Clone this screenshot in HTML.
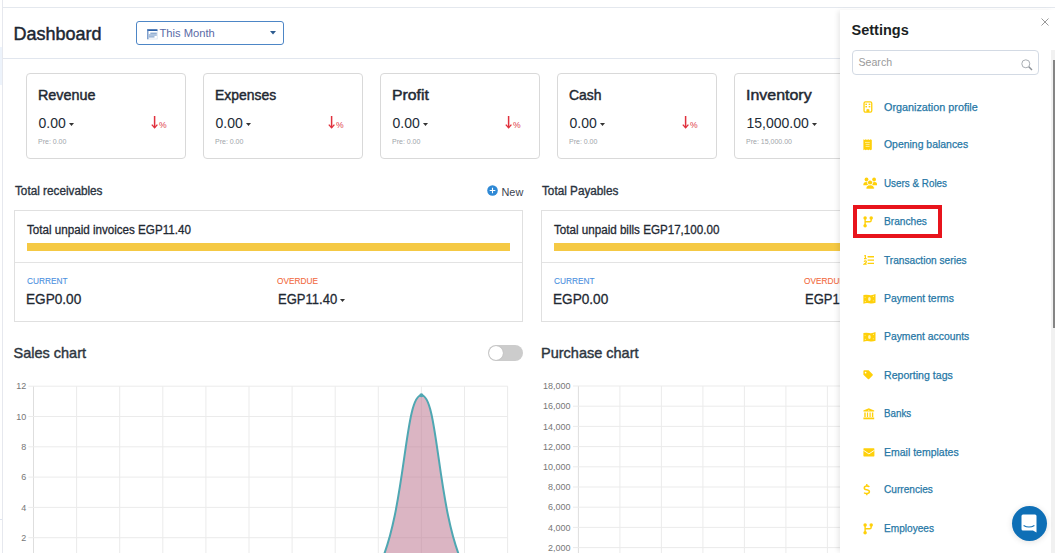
<!DOCTYPE html>
<html><head><meta charset="utf-8"><style>
html,body{margin:0;padding:0;}
body{width:1055px;height:553px;overflow:hidden;position:relative;background:#fff;font-family:"Liberation Sans",sans-serif;}
.t{position:absolute;white-space:nowrap;}
.r{position:absolute;}
svg.r{display:block}
</style></head><body>
<div class="r" style="left:2px;top:7px;width:1053px;height:1px;background:#e4e8ee"></div>
<div class="r" style="left:2px;top:0px;width:1px;height:553px;background:#e6e8ee"></div>
<div class="r" style="left:0px;top:47px;width:2px;height:38px;background:#edf3fb"></div>
<div class="r" style="left:0px;top:519px;width:2px;height:1px;background:#dde3ee"></div>
<div class="r" style="left:3px;top:58px;width:1052px;height:1px;background:#e1e6ee"></div>
<div class="t" style="left:13.50px;top:25.06px;font-size:18px;line-height:18px;color:#1d2733;font-weight:normal;-webkit-text-stroke:0.45px #1d2733;">Dashboard</div>
<div class="r" style="left:136px;top:21px;width:146px;height:22px;border:1px solid #4d86c6;border-radius:3px;box-sizing:content-box"></div>
<svg class="r" style="left:146.5px;top:28.5px" width="11" height="11" viewBox="0 0 11 11"><rect x="0.6" y="0.6" width="9.6" height="9.4" fill="none" stroke="#cad7ea" stroke-width="0.6"/><rect x="0.3" y="0.2" width="10.2" height="1.9" rx="0.6" fill="#2e62a8"/><rect x="0.3" y="0.2" width="1.1" height="10" fill="#5783bf"/><path d="M3.3 4.2H9.8M1.8 6.0H9.8M1.8 7.9H7.5" stroke="#4f7db8" stroke-width="0.9"/></svg>
<div class="t" style="left:159.50px;top:27.52px;font-size:11.2px;line-height:11.2px;color:#5a6aa6;font-weight:normal;">This Month</div>
<svg class="r" style="left:270px;top:31px" width="6" height="4" viewBox="0 0 6 4"><path d="M0 0H6L3 3.5Z" fill="#2d5b8f"/></svg>
<div class="r" style="left:26px;top:73px;width:158px;height:84px;border:1px solid #d9d9d9;border-radius:4px;box-sizing:content-box;background:#fff"></div>
<div class="t" style="left:38.00px;top:88.33px;font-size:14.5px;line-height:14.5px;color:#1f2933;font-weight:normal;-webkit-text-stroke:0.45px #1f2933;transform:scaleX(0.99);transform-origin:0 0;">Revenue</div>
<div class="t" style="left:38.50px;top:116.45px;font-size:14px;line-height:14px;color:#222b36;font-weight:normal;white-space:nowrap;">0.00<svg style="display:inline-block;margin-left:3px;vertical-align:2px" width="5" height="3" viewBox="0 0 5 3"><path d="M0 0H5L2.5 3Z" fill="#333"/></svg></div>
<div class="t" style="left:38.00px;top:138.07px;font-size:7px;line-height:7px;color:#a0a5aa;font-weight:normal;">Pre: 0.00</div>
<svg class="r" style="left:151px;top:115px" width="7" height="14" viewBox="0 0 7 14"><path d="M3.6 1V12.6" stroke="#e0303c" stroke-width="1.5"/><path d="M0.8 9.6L3.6 12.8L6.4 9.6" fill="none" stroke="#e0303c" stroke-width="1.3"/></svg>
<div class="t" style="left:159.00px;top:121.22px;font-size:8.6px;line-height:8.6px;color:#e0404a;font-weight:normal;">%</div>
<div class="r" style="left:203px;top:73px;width:158px;height:84px;border:1px solid #d9d9d9;border-radius:4px;box-sizing:content-box;background:#fff"></div>
<div class="t" style="left:215.00px;top:88.33px;font-size:14.5px;line-height:14.5px;color:#1f2933;font-weight:normal;-webkit-text-stroke:0.45px #1f2933;transform:scaleX(0.96);transform-origin:0 0;">Expenses</div>
<div class="t" style="left:215.50px;top:116.45px;font-size:14px;line-height:14px;color:#222b36;font-weight:normal;white-space:nowrap;">0.00<svg style="display:inline-block;margin-left:3px;vertical-align:2px" width="5" height="3" viewBox="0 0 5 3"><path d="M0 0H5L2.5 3Z" fill="#333"/></svg></div>
<div class="t" style="left:215.00px;top:138.07px;font-size:7px;line-height:7px;color:#a0a5aa;font-weight:normal;">Pre: 0.00</div>
<svg class="r" style="left:328px;top:115px" width="7" height="14" viewBox="0 0 7 14"><path d="M3.6 1V12.6" stroke="#e0303c" stroke-width="1.5"/><path d="M0.8 9.6L3.6 12.8L6.4 9.6" fill="none" stroke="#e0303c" stroke-width="1.3"/></svg>
<div class="t" style="left:336.00px;top:121.22px;font-size:8.6px;line-height:8.6px;color:#e0404a;font-weight:normal;">%</div>
<div class="r" style="left:380px;top:73px;width:158px;height:84px;border:1px solid #d9d9d9;border-radius:4px;box-sizing:content-box;background:#fff"></div>
<div class="t" style="left:392.30px;top:88.33px;font-size:14.5px;line-height:14.5px;color:#1f2933;font-weight:normal;-webkit-text-stroke:0.45px #1f2933;transform:scaleX(1.09);transform-origin:0 0;">Profit</div>
<div class="t" style="left:392.50px;top:116.45px;font-size:14px;line-height:14px;color:#222b36;font-weight:normal;white-space:nowrap;">0.00<svg style="display:inline-block;margin-left:3px;vertical-align:2px" width="5" height="3" viewBox="0 0 5 3"><path d="M0 0H5L2.5 3Z" fill="#333"/></svg></div>
<div class="t" style="left:392.00px;top:138.07px;font-size:7px;line-height:7px;color:#a0a5aa;font-weight:normal;">Pre: 0.00</div>
<svg class="r" style="left:505px;top:115px" width="7" height="14" viewBox="0 0 7 14"><path d="M3.6 1V12.6" stroke="#e0303c" stroke-width="1.5"/><path d="M0.8 9.6L3.6 12.8L6.4 9.6" fill="none" stroke="#e0303c" stroke-width="1.3"/></svg>
<div class="t" style="left:513.00px;top:121.22px;font-size:8.6px;line-height:8.6px;color:#e0404a;font-weight:normal;">%</div>
<div class="r" style="left:557px;top:73px;width:158px;height:84px;border:1px solid #d9d9d9;border-radius:4px;box-sizing:content-box;background:#fff"></div>
<div class="t" style="left:569.00px;top:88.33px;font-size:14.5px;line-height:14.5px;color:#1f2933;font-weight:normal;-webkit-text-stroke:0.45px #1f2933;transform:scaleX(0.96);transform-origin:0 0;">Cash</div>
<div class="t" style="left:569.50px;top:116.45px;font-size:14px;line-height:14px;color:#222b36;font-weight:normal;white-space:nowrap;">0.00<svg style="display:inline-block;margin-left:3px;vertical-align:2px" width="5" height="3" viewBox="0 0 5 3"><path d="M0 0H5L2.5 3Z" fill="#333"/></svg></div>
<div class="t" style="left:569.00px;top:138.07px;font-size:7px;line-height:7px;color:#a0a5aa;font-weight:normal;">Pre: 0.00</div>
<svg class="r" style="left:682px;top:115px" width="7" height="14" viewBox="0 0 7 14"><path d="M3.6 1V12.6" stroke="#e0303c" stroke-width="1.5"/><path d="M0.8 9.6L3.6 12.8L6.4 9.6" fill="none" stroke="#e0303c" stroke-width="1.3"/></svg>
<div class="t" style="left:690.00px;top:121.22px;font-size:8.6px;line-height:8.6px;color:#e0404a;font-weight:normal;">%</div>
<div class="r" style="left:734px;top:73px;width:158px;height:84px;border:1px solid #d9d9d9;border-radius:4px;box-sizing:content-box;background:#fff"></div>
<div class="t" style="left:746.30px;top:88.33px;font-size:14.5px;line-height:14.5px;color:#1f2933;font-weight:normal;-webkit-text-stroke:0.45px #1f2933;transform:scaleX(1.1);transform-origin:0 0;">Inventory</div>
<div class="t" style="left:746.50px;top:116.45px;font-size:14px;line-height:14px;color:#222b36;font-weight:normal;white-space:nowrap;">15,000.00<svg style="display:inline-block;margin-left:3px;vertical-align:2px" width="5" height="3" viewBox="0 0 5 3"><path d="M0 0H5L2.5 3Z" fill="#333"/></svg></div>
<div class="t" style="left:746.00px;top:138.07px;font-size:7px;line-height:7px;color:#a0a5aa;font-weight:normal;">Pre: 15,000.00</div>
<div class="t" style="left:14.50px;top:185.39px;font-size:12.3px;line-height:12.3px;color:#2a3340;font-weight:normal;-webkit-text-stroke:0.35px #2a3340;transform:scaleX(0.955);transform-origin:0 0;">Total receivables</div>
<div class="r" style="left:14px;top:210px;width:507px;height:110px;border:1px solid #e0e0e0;box-sizing:content-box;background:#fff"></div>
<div class="t" style="left:27.00px;top:223.99px;font-size:12.3px;line-height:12.3px;color:#1f2933;font-weight:normal;-webkit-text-stroke:0.3px #1f2933;transform:scaleX(0.945);transform-origin:0 0;">Total unpaid invoices EGP11.40</div>
<div class="r" style="left:27px;top:243px;width:483px;height:8px;background:#f5c944"></div>
<div class="r" style="left:15px;top:262px;width:507px;height:1px;background:#e3e3e3"></div>
<div class="t" style="left:26.50px;top:276.63px;font-size:9.3px;line-height:9.3px;color:#4a8fe0;font-weight:normal;-webkit-text-stroke:0.1px #4a8fe0;transform:scaleX(0.89);transform-origin:0 0;">CURRENT</div>
<div class="t" style="left:25.80px;top:291.77px;font-size:14.8px;line-height:14.8px;color:#1f2933;font-weight:normal;-webkit-text-stroke:0.3px #1f2933;transform:scaleX(0.92);transform-origin:0 0;">EGP0.00</div>
<div class="t" style="left:277.00px;top:276.63px;font-size:9.3px;line-height:9.3px;color:#f2683c;font-weight:normal;-webkit-text-stroke:0.1px #f2683c;transform:scaleX(0.89);transform-origin:0 0;">OVERDUE</div>
<div class="t" style="left:277.80px;top:291.77px;font-size:14.8px;line-height:14.8px;color:#1f2933;font-weight:normal;white-space:nowrap;-webkit-text-stroke:0.3px #1f2933;transform:scaleX(0.88);transform-origin:0 0;">EGP11.40</div>
<svg class="r" style="left:340px;top:299px" width="5" height="3" viewBox="0 0 5 3"><path d="M0 0H5L2.5 3Z" fill="#333"/></svg>
<div class="t" style="left:541.50px;top:185.39px;font-size:12.3px;line-height:12.3px;color:#2a3340;font-weight:normal;-webkit-text-stroke:0.35px #2a3340;transform:scaleX(0.955);transform-origin:0 0;">Total Payables</div>
<div class="r" style="left:541px;top:210px;width:507px;height:110px;border:1px solid #e0e0e0;box-sizing:content-box;background:#fff"></div>
<div class="t" style="left:554.00px;top:223.99px;font-size:12.3px;line-height:12.3px;color:#1f2933;font-weight:normal;-webkit-text-stroke:0.3px #1f2933;transform:scaleX(0.945);transform-origin:0 0;">Total unpaid bills EGP17,100.00</div>
<div class="r" style="left:554px;top:243px;width:483px;height:8px;background:#f5c944"></div>
<div class="r" style="left:542px;top:262px;width:507px;height:1px;background:#e3e3e3"></div>
<div class="t" style="left:553.50px;top:276.63px;font-size:9.3px;line-height:9.3px;color:#4a8fe0;font-weight:normal;-webkit-text-stroke:0.1px #4a8fe0;transform:scaleX(0.89);transform-origin:0 0;">CURRENT</div>
<div class="t" style="left:552.80px;top:291.77px;font-size:14.8px;line-height:14.8px;color:#1f2933;font-weight:normal;-webkit-text-stroke:0.3px #1f2933;transform:scaleX(0.92);transform-origin:0 0;">EGP0.00</div>
<div class="t" style="left:804.00px;top:276.63px;font-size:9.3px;line-height:9.3px;color:#f2683c;font-weight:normal;-webkit-text-stroke:0.1px #f2683c;transform:scaleX(0.89);transform-origin:0 0;">OVERDUE</div>
<div class="t" style="left:804.80px;top:291.77px;font-size:14.8px;line-height:14.8px;color:#1f2933;font-weight:normal;white-space:nowrap;-webkit-text-stroke:0.3px #1f2933;transform:scaleX(0.88);transform-origin:0 0;">EGP17,100.00</div>
<svg class="r" style="left:867px;top:299px" width="5" height="3" viewBox="0 0 5 3"><path d="M0 0H5L2.5 3Z" fill="#333"/></svg>
<svg class="r" style="left:487.2px;top:185.2px" width="11" height="11" viewBox="0 0 11 11"><circle cx="5.5" cy="5.5" r="5.3" fill="#2f89d5"/><path d="M5.5 2.7V8.3M2.7 5.5H8.3" stroke="#fff" stroke-width="1.1"/></svg>
<div class="t" style="left:501.50px;top:186.57px;font-size:10.9px;line-height:10.9px;color:#3b4450;font-weight:normal;">New</div>
<div class="t" style="left:13.50px;top:346.03px;font-size:14.5px;line-height:14.5px;color:#2e3640;font-weight:normal;-webkit-text-stroke:0.4px #2e3640;">Sales chart</div>
<div class="t" style="left:541.00px;top:345.53px;font-size:14.5px;line-height:14.5px;color:#2e3640;font-weight:normal;-webkit-text-stroke:0.4px #2e3640;">Purchase chart</div>
<div class="r" style="left:488px;top:344.5px;width:35px;height:16px;background:#cccccc;border-radius:8px"></div>
<div class="r" style="left:489px;top:345.5px;width:14px;height:14px;background:#fff;border-radius:50%;box-shadow:0 0 1px rgba(0,0,0,.25)"></div>
<svg class="r" style="left:0;top:370px" width="840" height="183" viewBox="0 370 840 183"><line x1="33.5" y1="386.2" x2="33.5" y2="600" stroke="#dedede" stroke-width="1"/><line x1="76.6" y1="386.2" x2="76.6" y2="600" stroke="#ebebeb" stroke-width="1"/><line x1="119.7" y1="386.2" x2="119.7" y2="600" stroke="#ebebeb" stroke-width="1"/><line x1="162.8" y1="386.2" x2="162.8" y2="600" stroke="#ebebeb" stroke-width="1"/><line x1="205.9" y1="386.2" x2="205.9" y2="600" stroke="#ebebeb" stroke-width="1"/><line x1="249.0" y1="386.2" x2="249.0" y2="600" stroke="#ebebeb" stroke-width="1"/><line x1="292.1" y1="386.2" x2="292.1" y2="600" stroke="#ebebeb" stroke-width="1"/><line x1="335.2" y1="386.2" x2="335.2" y2="600" stroke="#ebebeb" stroke-width="1"/><line x1="378.3" y1="386.2" x2="378.3" y2="600" stroke="#ebebeb" stroke-width="1"/><line x1="421.4" y1="386.2" x2="421.4" y2="600" stroke="#ebebeb" stroke-width="1"/><line x1="464.5" y1="386.2" x2="464.5" y2="600" stroke="#ebebeb" stroke-width="1"/><line x1="507.6" y1="386.2" x2="507.6" y2="600" stroke="#ebebeb" stroke-width="1"/><line x1="28.3" y1="386.2" x2="507.7" y2="386.2" stroke="#ebebeb" stroke-width="1"/><line x1="28.3" y1="416.5" x2="507.7" y2="416.5" stroke="#ebebeb" stroke-width="1"/><line x1="28.3" y1="446.8" x2="507.7" y2="446.8" stroke="#ebebeb" stroke-width="1"/><line x1="28.3" y1="477.1" x2="507.7" y2="477.1" stroke="#ebebeb" stroke-width="1"/><line x1="28.3" y1="507.4" x2="507.7" y2="507.4" stroke="#ebebeb" stroke-width="1"/><line x1="28.3" y1="537.7" x2="507.7" y2="537.7" stroke="#ebebeb" stroke-width="1"/><line x1="28.3" y1="568.0" x2="507.7" y2="568.0" stroke="#ebebeb" stroke-width="1"/><text x="26.2" y="389.4" text-anchor="end" font-family="Liberation Sans" font-size="9" fill="#777">12</text><text x="26.2" y="419.7" text-anchor="end" font-family="Liberation Sans" font-size="9" fill="#777">10</text><text x="26.2" y="450.0" text-anchor="end" font-family="Liberation Sans" font-size="9" fill="#777">8</text><text x="26.2" y="480.3" text-anchor="end" font-family="Liberation Sans" font-size="9" fill="#777">6</text><text x="26.2" y="510.6" text-anchor="end" font-family="Liberation Sans" font-size="9" fill="#777">4</text><text x="26.2" y="540.9" text-anchor="end" font-family="Liberation Sans" font-size="9" fill="#777">2</text><path d="M335.2 568 C349.0 568 364.5 568 378.3 568 C406.06 512.38 404.16 395.29 421.4 395.29 C438.64 395.29 436.74 512.38 464.5 568 Z" fill="rgba(190,120,145,0.55)" stroke="none"/><path d="M378.3 568 C406.06 512.38 404.16 395.29 421.4 395.29 C438.64 395.29 436.74 512.38 464.5 568" fill="none" stroke="#4fa7b2" stroke-width="2"/><circle cx="421.4" cy="395.3" r="2" fill="#4fa7b2"/><line x1="578.4" y1="386.0" x2="578.4" y2="600" stroke="#dedede" stroke-width="1"/><line x1="619.9" y1="386.0" x2="619.9" y2="600" stroke="#ebebeb" stroke-width="1"/><line x1="661.4" y1="386.0" x2="661.4" y2="600" stroke="#ebebeb" stroke-width="1"/><line x1="702.9" y1="386.0" x2="702.9" y2="600" stroke="#ebebeb" stroke-width="1"/><line x1="744.4" y1="386.0" x2="744.4" y2="600" stroke="#ebebeb" stroke-width="1"/><line x1="785.9" y1="386.0" x2="785.9" y2="600" stroke="#ebebeb" stroke-width="1"/><line x1="827.4" y1="386.0" x2="827.4" y2="600" stroke="#ebebeb" stroke-width="1"/><line x1="868.9" y1="386.0" x2="868.9" y2="600" stroke="#ebebeb" stroke-width="1"/><line x1="910.4" y1="386.0" x2="910.4" y2="600" stroke="#ebebeb" stroke-width="1"/><line x1="951.9" y1="386.0" x2="951.9" y2="600" stroke="#ebebeb" stroke-width="1"/><line x1="993.4" y1="386.0" x2="993.4" y2="600" stroke="#ebebeb" stroke-width="1"/><line x1="1034.9" y1="386.0" x2="1034.9" y2="600" stroke="#ebebeb" stroke-width="1"/><line x1="573" y1="386.0" x2="840" y2="386.0" stroke="#ebebeb" stroke-width="1"/><line x1="573" y1="406.2" x2="840" y2="406.2" stroke="#ebebeb" stroke-width="1"/><line x1="573" y1="426.4" x2="840" y2="426.4" stroke="#ebebeb" stroke-width="1"/><line x1="573" y1="446.6" x2="840" y2="446.6" stroke="#ebebeb" stroke-width="1"/><line x1="573" y1="466.8" x2="840" y2="466.8" stroke="#ebebeb" stroke-width="1"/><line x1="573" y1="487.0" x2="840" y2="487.0" stroke="#ebebeb" stroke-width="1"/><line x1="573" y1="507.2" x2="840" y2="507.2" stroke="#ebebeb" stroke-width="1"/><line x1="573" y1="527.4" x2="840" y2="527.4" stroke="#ebebeb" stroke-width="1"/><line x1="573" y1="547.6" x2="840" y2="547.6" stroke="#ebebeb" stroke-width="1"/><text x="570.5" y="389.2" text-anchor="end" font-family="Liberation Sans" font-size="9" fill="#777">18,000</text><text x="570.5" y="409.4" text-anchor="end" font-family="Liberation Sans" font-size="9" fill="#777">16,000</text><text x="570.5" y="429.6" text-anchor="end" font-family="Liberation Sans" font-size="9" fill="#777">14,000</text><text x="570.5" y="449.8" text-anchor="end" font-family="Liberation Sans" font-size="9" fill="#777">12,000</text><text x="570.5" y="470.0" text-anchor="end" font-family="Liberation Sans" font-size="9" fill="#777">10,000</text><text x="570.5" y="490.2" text-anchor="end" font-family="Liberation Sans" font-size="9" fill="#777">8,000</text><text x="570.5" y="510.4" text-anchor="end" font-family="Liberation Sans" font-size="9" fill="#777">6,000</text><text x="570.5" y="530.6" text-anchor="end" font-family="Liberation Sans" font-size="9" fill="#777">4,000</text><text x="570.5" y="550.8" text-anchor="end" font-family="Liberation Sans" font-size="9" fill="#777">2,000</text></svg>
<div class="r" style="left:840px;top:10px;width:215px;height:543px;background:#fff;box-shadow:-3px 0 5px -1px rgba(0,0,0,0.09)"></div>
<div class="t" style="left:851.50px;top:22.93px;font-size:14.5px;line-height:14.5px;color:#1b1f24;font-weight:bold;">Settings</div>
<svg class="r" style="left:1041px;top:18px" width="8" height="8" viewBox="0 0 8 8"><path d="M0.5 0.5L7.5 7.5M7.5 0.5L0.5 7.5" stroke="#999" stroke-width="1"/></svg>
<div class="r" style="left:852px;top:50px;width:185px;height:23px;border:1px solid #d3dae4;border-radius:4px;box-sizing:content-box;background:#fff"></div>
<div class="t" style="left:858.50px;top:57.33px;font-size:10.6px;line-height:10.6px;color:#9a9a9a;font-weight:normal;">Search</div>
<svg class="r" style="left:1021px;top:59px" width="12" height="12" viewBox="0 0 12 12"><circle cx="4.8" cy="4.8" r="4" fill="none" stroke="#a8adb3" stroke-width="1"/><path d="M7.8 7.8L11 11" stroke="#8d9299" stroke-width="1.5"/></svg>
<svg class="r" style="left:862.5px;top:101px" width="10" height="12" viewBox="0 0 10 12"><rect x="1.05" y="0.85" width="7.7" height="10.3" rx="1.4" fill="none" stroke="#fed00a" stroke-width="1.3"/><rect x="2.4" y="2.6" width="1.6" height="1.4" fill="#fed00a"/><rect x="5.7" y="2.6" width="1.6" height="1.4" fill="#fed00a"/><rect x="2.4" y="5.0" width="1.6" height="1.4" fill="#fed00a"/><rect x="5.7" y="5.0" width="1.6" height="1.4" fill="#fed00a"/><path d="M3.4 11V8.6Q4.9 7.4 6.4 8.6V11Z" fill="#fed00a"/></svg>
<div class="t" style="left:883.50px;top:101.52px;font-size:11.2px;line-height:11.2px;color:#2677a6;font-weight:normal;-webkit-text-stroke:0.25px #2677a6;transform:scaleX(0.966);transform-origin:0 0;">Organization profile</div>
<svg class="r" style="left:862.5px;top:139px" width="10" height="12" viewBox="0 0 10 12"><path d="M0.4 0.3L1.6 0.9L2.8 0.3L4 0.9L5.2 0.3L6.4 0.9L7.6 0.3L8.8 0.9V10.6L7.6 11.2L6.4 10.6L5.2 11.2L4 10.6L2.8 11.2L1.6 10.6L0.4 11.2Z" fill="#fed00a"/><path d="M2 3.4H6.8M2.6 5.4H6.6M2.6 7.4H6.6" stroke="#fff2a8" stroke-width="0.9"/></svg>
<div class="t" style="left:883.50px;top:139.12px;font-size:11.2px;line-height:11.2px;color:#2677a6;font-weight:normal;-webkit-text-stroke:0.25px #2677a6;transform:scaleX(0.933);transform-origin:0 0;">Opening balances</div>
<svg class="r" style="left:862.5px;top:177px" width="14" height="12" viewBox="0 0 14 12"><circle cx="3.5" cy="2.5" r="1.9" fill="#fed00a"/><circle cx="11.1" cy="2.5" r="1.9" fill="#fed00a"/><path d="M0.3 8.3Q0.3 5.1 3.2 5.1Q6 5.1 6 8.3Z" fill="#fed00a"/><path d="M8.6 8.3Q8.6 5.1 11.4 5.1Q14.3 5.1 14.3 8.3Z" fill="#fed00a"/><circle cx="7.05" cy="5.6" r="2.6" fill="#fed00a" stroke="#fff" stroke-width="0.9"/><path d="M2.9 12.2Q2.9 7.8 7.2 7.8Q11.5 7.8 11.5 12.2Z" fill="#fed00a" stroke="#fff" stroke-width="0.9"/></svg>
<div class="t" style="left:883.50px;top:178.22px;font-size:11.2px;line-height:11.2px;color:#2677a6;font-weight:normal;-webkit-text-stroke:0.25px #2677a6;transform:scaleX(0.881);transform-origin:0 0;">Users &amp; Roles</div>
<svg class="r" style="left:862.5px;top:215.5px" width="11" height="12" viewBox="0 0 11 12"><circle cx="2.1" cy="2.0" r="1.75" fill="#fed00a"/><circle cx="8.2" cy="2.0" r="1.75" fill="#fed00a"/><circle cx="2.1" cy="9.7" r="1.75" fill="#fed00a"/><path d="M2.1 2V9.7M8.2 2V4.2Q8.2 5.7 6.7 5.7H2.1" fill="none" stroke="#fed00a" stroke-width="1.4"/></svg>
<div class="t" style="left:883.50px;top:215.72px;font-size:11.2px;line-height:11.2px;color:#2677a6;font-weight:normal;-webkit-text-stroke:0.25px #2677a6;transform:scaleX(0.908);transform-origin:0 0;">Branches</div>
<svg class="r" style="left:862.5px;top:255px" width="12" height="11" viewBox="0 0 12 11"><path d="M1.3 1.0L2.4 0.4V3.6M1.0 3.6H3.6" fill="none" stroke="#fed00a" stroke-width="1.1"/><path d="M1.0 6.6Q1.5 5.9 2.4 5.9Q3.5 6.0 3.4 7.0Q3.2 7.8 1.0 9.3H3.7" fill="none" stroke="#fed00a" stroke-width="1.1"/><path d="M4.6 1.8H11M4.6 5.1H11M4.6 8.4H11" stroke="#fed00a" stroke-width="1.4"/></svg>
<div class="t" style="left:883.50px;top:254.82px;font-size:11.2px;line-height:11.2px;color:#2677a6;font-weight:normal;-webkit-text-stroke:0.25px #2677a6;transform:scaleX(0.908);transform-origin:0 0;">Transaction series</div>
<svg class="r" style="left:862.5px;top:294px" width="13" height="10" viewBox="0 0 13 10"><path d="M0.4 1.0Q3 0.3 6.2 1.0Q9.4 1.6 12.5 0.1V8.7Q9.4 10.0 6.2 9.2Q3 8.5 0.4 9.8Z" fill="#fed00a"/><ellipse cx="6.4" cy="5.0" rx="1.3" ry="1.9" fill="#fff6c0"/><circle cx="2.1" cy="3.3" r="0.55" fill="#fff2a0"/><circle cx="10.4" cy="2.4" r="0.55" fill="#fff2a0"/><circle cx="2.3" cy="7.4" r="0.55" fill="#fff2a0"/><circle cx="10.3" cy="6.7" r="0.55" fill="#fff2a0"/></svg>
<div class="t" style="left:883.50px;top:293.22px;font-size:11.2px;line-height:11.2px;color:#2677a6;font-weight:normal;-webkit-text-stroke:0.25px #2677a6;transform:scaleX(0.93);transform-origin:0 0;">Payment terms</div>
<svg class="r" style="left:862.5px;top:332px" width="13" height="10" viewBox="0 0 13 10"><path d="M0.4 1.0Q3 0.3 6.2 1.0Q9.4 1.6 12.5 0.1V8.7Q9.4 10.0 6.2 9.2Q3 8.5 0.4 9.8Z" fill="#fed00a"/><ellipse cx="6.4" cy="5.0" rx="1.3" ry="1.9" fill="#fff6c0"/><circle cx="2.1" cy="3.3" r="0.55" fill="#fff2a0"/><circle cx="10.4" cy="2.4" r="0.55" fill="#fff2a0"/><circle cx="2.3" cy="7.4" r="0.55" fill="#fff2a0"/><circle cx="10.3" cy="6.7" r="0.55" fill="#fff2a0"/></svg>
<div class="t" style="left:883.50px;top:331.32px;font-size:11.2px;line-height:11.2px;color:#2677a6;font-weight:normal;-webkit-text-stroke:0.25px #2677a6;transform:scaleX(0.926);transform-origin:0 0;">Payment accounts</div>
<svg class="r" style="left:862.5px;top:370.4px" width="11" height="11" viewBox="0 0 11 11"><path d="M0.4 1.2Q0.4 0.3 1.3 0.3H5.6L9.6 4.3Q10.2 4.9 9.6 5.5L6.1 9.0Q5.5 9.6 4.9 9.0L0.4 4.8Z" fill="#fed00a"/><circle cx="2.6" cy="2.6" r="0.85" fill="#fff"/></svg>
<div class="t" style="left:883.50px;top:369.82px;font-size:11.2px;line-height:11.2px;color:#2677a6;font-weight:normal;-webkit-text-stroke:0.25px #2677a6;transform:scaleX(0.946);transform-origin:0 0;">Reporting tags</div>
<svg class="r" style="left:862.5px;top:407.6px" width="12" height="12" viewBox="0 0 12 12"><path d="M5.8 0.2L11.2 2.6V3.5H0.4V2.6Z" fill="#fed00a"/><circle cx="5.8" cy="2.4" r="0.55" fill="#fff3b0"/><path d="M1.3 4.6H2.7V9.1H1.3ZM3.9 4.6H5.1V9.1H3.9ZM6.5 4.6H7.7V9.1H6.5ZM8.9 4.6H10.3V9.1H8.9Z" fill="#fed00a"/><rect x="0.4" y="9.5" width="10.8" height="1.8" fill="#fed00a"/></svg>
<div class="t" style="left:883.50px;top:407.82px;font-size:11.2px;line-height:11.2px;color:#2677a6;font-weight:normal;-webkit-text-stroke:0.25px #2677a6;transform:scaleX(0.873);transform-origin:0 0;">Banks</div>
<svg class="r" style="left:862.5px;top:447.6px" width="12" height="9" viewBox="0 0 12 9"><rect x="0.4" y="0.3" width="11" height="8.1" rx="0.6" fill="#fed00a"/><path d="M0.3 2.2L5.9 5.9L11.5 2.2" fill="none" stroke="#fff" stroke-width="0.9"/></svg>
<div class="t" style="left:883.50px;top:446.52px;font-size:11.2px;line-height:11.2px;color:#2677a6;font-weight:normal;-webkit-text-stroke:0.25px #2677a6;transform:scaleX(0.938);transform-origin:0 0;">Email templates</div>
<svg class="r" style="left:862.5px;top:484.2px" width="8" height="12" viewBox="0 0 8 12"><path d="M6.3 2.9Q5.8 2.1 3.9 2.1Q1.3 2.1 1.3 3.9Q1.3 5.3 3.8 5.7Q6.4 6.2 6.4 7.8Q6.4 9.5 3.8 9.5Q1.8 9.5 1.2 8.6" fill="none" stroke="#fed00a" stroke-width="1.5"/><path d="M3.8 0.1V2M3.8 9.3V11.3" stroke="#fed00a" stroke-width="1.4"/></svg>
<div class="t" style="left:883.50px;top:484.32px;font-size:11.2px;line-height:11.2px;color:#2677a6;font-weight:normal;-webkit-text-stroke:0.25px #2677a6;transform:scaleX(0.903);transform-origin:0 0;">Currencies</div>
<svg class="r" style="left:862.5px;top:523px" width="11" height="12" viewBox="0 0 11 12"><circle cx="2.1" cy="2.0" r="1.75" fill="#fed00a"/><circle cx="8.2" cy="2.0" r="1.75" fill="#fed00a"/><circle cx="2.1" cy="9.7" r="1.75" fill="#fed00a"/><path d="M2.1 2V9.7M8.2 2V4.2Q8.2 5.7 6.7 5.7H2.1" fill="none" stroke="#fed00a" stroke-width="1.4"/></svg>
<div class="t" style="left:883.50px;top:523.42px;font-size:11.2px;line-height:11.2px;color:#2677a6;font-weight:normal;-webkit-text-stroke:0.25px #2677a6;transform:scaleX(0.904);transform-origin:0 0;">Employees</div>
<div class="r" style="left:853px;top:205px;width:81px;height:25px;border:4px solid #e8141c;box-sizing:content-box"></div>
<div class="r" style="left:1051px;top:50px;width:4px;height:503px;background:#f1f1f1"></div>
<div class="r" style="left:1053px;top:60px;width:2px;height:268px;background:#858585"></div>
<div class="r" style="left:1011.5px;top:506px;width:35px;height:35px;border-radius:50%;background:#0e6fb6;box-shadow:0 1px 6px rgba(0,0,0,0.12)"></div>
<svg class="r" style="left:1021px;top:514px" width="16" height="19" viewBox="0 0 16 19"><path d="M2 0.5H14Q15.5 0.5 15.5 2V18.5L12 16.5H2Q0.5 16.5 0.5 15V2Q0.5 0.5 2 0.5Z" fill="#fff"/><path d="M2.6 11.4Q8 14.6 13.4 11.4" fill="none" stroke="#0e6fb6" stroke-width="1.2"/></svg>

</body></html>
